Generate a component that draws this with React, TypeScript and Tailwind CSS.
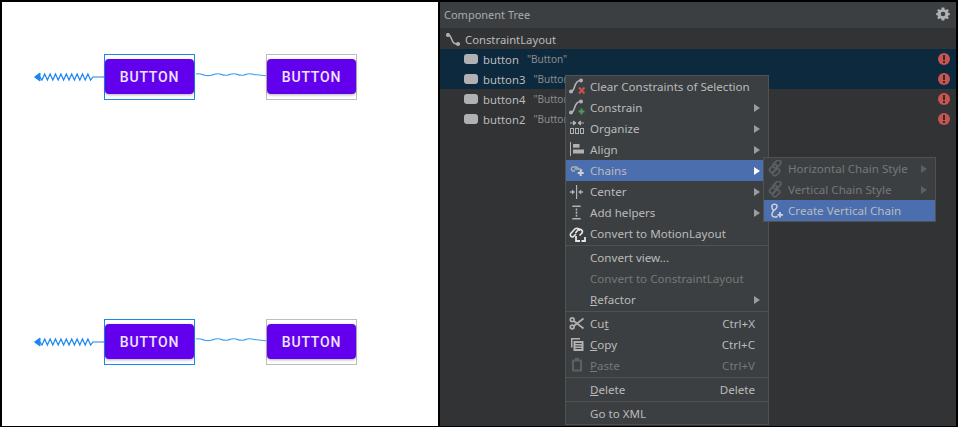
import React from 'react';

const uiFont = "font-['Noto_Sans',sans-serif]";

function Zigzag() {
  return (
    <svg width="72" height="14" viewBox="0 0 72 14" className="absolute left-[32px] top-[16px]">
      <path d="M0.5 7 L6 3 V11 Z" fill="#1a86f0" stroke="#1a86f0" />
      <path d="M6 7 L8 10 L10.7 4 L13.4 10 L16.1 4 L18.8 10 L21.5 4 L24.2 10 L26.9 4 L29.6 10 L32.3 4 L35 10 L37.7 4 L40.4 10 L43.1 4 L45.8 10 L48.5 4 L51.2 10 L53.9 4 L56.6 10 L59 7 H70" fill="none" stroke="#1a86f0" strokeWidth="1.2" />
    </svg>
  );
}

function Wave() {
  return (
    <svg width="72" height="8" viewBox="0 0 72 8" className="absolute left-[194px] top-[17px]">
      <path d="M0 3 C3 2 5 3 8 4 S13 5 16 4 S21 2 24 3 S29 5 32 4 S37 2 40 3 S45 5 48 4 S53 2 56 3 S60 4 63 4 L72 5" fill="none" stroke="#3d9bf5" strokeWidth="1.1" />
    </svg>
  );
}

function CanvasButton({ left }: { left: string }) {
  return (
    <div className={`absolute ${left} top-[5px] flex h-[35px] w-[89px] items-center justify-center rounded-[4px] bg-[#6200ee] pt-[1px] font-['Roboto',sans-serif] text-[14px] font-medium tracking-[0.8px] text-white/90 shadow-[0_1px_3px_rgba(0,0,0,0.3)]`}>
      BUTTON
    </div>
  );
}

function CanvasRow({ className }: { className: string }) {
  return (
    <div className={`relative h-[46px] ${className}`}>
      <Zigzag />
      <Wave />
      <div className="absolute left-[102px] top-0 h-[46px] w-[91px] border border-[#1a86f0]" />
      <div className="absolute left-[264px] top-0 h-[46px] w-[91px] border border-[#bdbdbd]" />
      <CanvasButton left="left-[103px]" />
      <CanvasButton left="left-[265px]" />
    </div>
  );
}

function WidgetIcon() {
  return <span className="h-[10px] w-[14px] rounded-[3px] bg-[#afb1b3]" />;
}

function ErrorIcon() {
  return (
    <svg width="12" height="12" viewBox="0 0 12 12" className="shrink-0">
      <circle cx="6" cy="6" r="6" fill="#c75450" />
      <rect x="5" y="2" width="2" height="5" fill="#2b2d2e" />
      <rect x="5" y="8" width="2" height="2" fill="#2b2d2e" />
    </svg>
  );
}

function TreeRow({ name, selected }: { name: string; selected?: boolean }) {
  return (
    <div className={`flex h-[20px] items-center pl-[24px] pr-[6px] ${selected ? 'bg-[#0d293e]' : ''}`}>
      <WidgetIcon />
      <span className="ml-[5px] pt-[2px] text-[11.3px] text-[#bbbbbb]">{name}</span>
      <span className="ml-[8px] pt-[1px] text-[10px] text-[#8c8c8c]">"Button"</span>
      <span className="flex-1" />
      <ErrorIcon />
    </div>
  );
}

function GearIcon() {
  return (
    <svg width="14" height="14" viewBox="0 0 14 14" className="mb-[2px]">
      <path d="M5.7 0.5 H8.3 L8.7 2.4 L10 2.9 L11.5 1.9 L12.9 3.5 L11.8 4.8 L12.2 5.8 L13.8 6.1 V8.1 L12.2 8.4 L11.8 9.5 L12.8 10.9 L11.2 12.3 L9.9 11.3 L8.7 11.8 L8.3 13.5 H5.7 L5.3 11.8 L4.1 11.3 L2.8 12.3 L1.2 10.9 L2.2 9.5 L1.8 8.4 L0.2 8.1 V6.1 L1.8 5.8 L2.2 4.8 L1.1 3.5 L2.5 1.9 L4 2.9 L5.3 2.4 Z" fill="#afb1b3" />
      <circle cx="7" cy="7" r="2.3" fill="#3c3f41" />
    </svg>
  );
}

function ConstraintGlyph({ badge }: { badge: 'x' | 'plus' }) {
  return (
    <svg width="18" height="18" viewBox="0 0 18 18">
      <path d="M3 13.5 C8 13.5 5 2.5 12.5 2.5" fill="none" stroke="#afb1b3" strokeWidth="1.6" />
      <circle cx="3" cy="13.5" r="2" fill="#afb1b3" />
      <circle cx="13" cy="2.5" r="2" fill="#afb1b3" />
      {badge === 'x' && <path d="M11 9.5 L16.5 15.5 M16.5 9.5 L11 15.5" stroke="#c75450" strokeWidth="2" />}
      {badge === 'plus' && <path d="M13.5 9.5 V15.5 M10.5 12.5 H16.5" stroke="#499c54" strokeWidth="2" />}
    </svg>
  );
}

function DiagonalChain() {
  return (
    <svg width="18" height="18" viewBox="0 0 18 18" fill="none" stroke="#5d6063" strokeWidth="1.6">
      <rect x="6.5" y="1.5" width="9" height="5" rx="2.5" transform="rotate(-45 11 4)" />
      <rect x="3" y="6" width="9" height="5" rx="2.5" transform="rotate(-45 7.5 8.5)" />
      <rect x="6" y="10" width="8" height="4.5" rx="2.2" transform="rotate(-45 10 12)" />
    </svg>
  );
}

function VerticalChainAdd() {
  return (
    <svg width="18" height="18" viewBox="0 0 18 18" fill="none" stroke="#cfd1d3" strokeWidth="1.5">
      <path d="M6 9 C4 7 3.5 5 4 3.5 C4.6 1.8 8.4 1.8 9 3.5 C9.5 5 8 7 5.5 9 C4 10.5 3.5 12 4 13.5 C4.6 15.2 8 15.2 9.5 14.5" />
      <path d="M12 10 V15.5 M9.5 12.8 H15" strokeWidth="1.8" />
    </svg>
  );
}

const icons: Record<string, React.ReactNode> = {
  clear: <ConstraintGlyph badge="x" />,
  constrain: <ConstraintGlyph badge="plus" />,
  organize: (
    <svg width="18" height="18" viewBox="0 0 18 18" fill="none" stroke="#afb1b3">
      <path d="M2 3 H6 M8 3 L5.5 1 V5 Z M16 3 H12 M10 3 L12.5 1 V5 Z" fill="#afb1b3" />
      <rect x="2.5" y="8.5" width="3" height="5" />
      <rect x="7.5" y="8.5" width="3" height="5" />
      <rect x="12.5" y="8.5" width="3" height="5" />
    </svg>
  ),
  align: (
    <svg width="18" height="18" viewBox="0 0 18 18" fill="#afb1b3">
      <rect x="2" y="1" width="1" height="14" />
      <rect x="5" y="3" width="6.5" height="3.7" />
      <rect x="5" y="8.5" width="11" height="4" />
    </svg>
  ),
  chains: (
    <svg width="18" height="18" viewBox="0 0 18 18" fill="none" stroke="#afb1b3" strokeWidth="1.4">
      <path d="M7 9 H4.5 A2.3 2.3 0 0 1 4.5 5 H9 A2.3 2.3 0 0 1 10 7.5" />
      <path d="M6.5 7 H12 A2.2 2.2 0 0 1 14 9" />
      <path d="M12.7 8 V14 M9.7 11 H15.7" stroke="#cfd1d3" strokeWidth="2" />
    </svg>
  ),
  center: (
    <svg width="18" height="18" viewBox="0 0 18 18" fill="#afb1b3">
      <rect x="8" y="2" width="1.2" height="14" />
      <path d="M2 8.3 H4 V6.5 L7 9 L4 11.5 V9.7 H2 Z M15 8.3 H13.2 V6.5 L10.2 9 L13.2 11.5 V9.7 H15 Z" />
    </svg>
  ),
  helpers: (
    <svg width="18" height="18" viewBox="0 0 18 18" fill="#afb1b3">
      <rect x="4.3" y="1.5" width="8.4" height="1.5" />
      <rect x="4.3" y="14" width="8.4" height="1.5" />
      <rect x="7.7" y="4.5" width="1.6" height="2" />
      <rect x="7.7" y="7.5" width="1.6" height="2.2" />
      <rect x="7.7" y="10.7" width="1.6" height="2" />
    </svg>
  ),
  motion: (
    <svg width="18" height="18" viewBox="0 0 18 18" fill="none" stroke="#e4e6e8" strokeWidth="1.6">
      <path d="M8 9 L5 12 A2.3 2.3 0 0 1 2.6 8.6 L7 3.8 A2.8 2.8 0 0 1 11.5 6" />
      <path d="M7.5 8 L9.5 5.5 A2.3 2.3 0 0 1 14 8 L11.5 10.5" />
      <path d="M8 11 V16 H12 M17 12 V16 H13.5" strokeWidth="1.8" />
    </svg>
  ),
  cut: (
    <svg width="18" height="18" viewBox="0 0 18 18" fill="none" stroke="#afb1b3" strokeWidth="1.7">
      <circle cx="4.2" cy="4.8" r="1.9" />
      <circle cx="4.2" cy="12" r="1.9" />
      <path d="M5.8 6 L15.5 13.5 M5.8 11 L15.5 3.5" />
    </svg>
  ),
  copy: (
    <svg width="18" height="18" viewBox="0 0 18 18">
      <path d="M3 2 H4.5 V11.5 H3 Z M3 2 H12 V3.5 H3 Z" fill="#afb1b3" />
      <rect x="5.5" y="5" width="10" height="10" fill="#afb1b3" />
      <path d="M7.5 7.5 H13.5 M7.5 10 H13.5 M7.5 12.5 H13.5" stroke="#3c3f41" />
    </svg>
  ),
  paste: (
    <svg width="18" height="18" viewBox="0 0 18 18" fill="none" stroke="#5d6063" strokeWidth="2">
      <rect x="5" y="3.5" width="8" height="10" />
      <path d="M7 2 H11" strokeWidth="2.5" />
    </svg>
  ),
};

type MenuEntry = {
  label?: React.ReactNode;
  icon?: string;
  arrow?: boolean;
  active?: boolean;
  disabled?: boolean;
  shortcut?: string;
  sep?: boolean;
};

const menu: MenuEntry[] = [
  { label: 'Clear Constraints of Selection', icon: 'clear' },
  { label: 'Constrain', icon: 'constrain', arrow: true },
  { label: 'Organize', icon: 'organize', arrow: true },
  { label: 'Align', icon: 'align', arrow: true },
  { label: 'Chains', icon: 'chains', arrow: true, active: true },
  { label: 'Center', icon: 'center', arrow: true },
  { label: 'Add helpers', icon: 'helpers', arrow: true },
  { label: 'Convert to MotionLayout', icon: 'motion' },
  { sep: true },
  { label: 'Convert view...' },
  { label: 'Convert to ConstraintLayout', disabled: true },
  { label: <><u>R</u>efactor</>, arrow: true },
  { sep: true },
  { label: <>Cu<u>t</u></>, icon: 'cut', shortcut: 'Ctrl+X' },
  { label: <><u>C</u>opy</>, icon: 'copy', shortcut: 'Ctrl+C' },
  { label: <><u>P</u>aste</>, icon: 'paste', shortcut: 'Ctrl+V', disabled: true },
  { sep: true },
  { label: <><u>D</u>elete</>, shortcut: 'Delete' },
  { sep: true },
  { label: 'Go to XML' },
];

function Arrow({ color }: { color: string }) {
  return (
    <svg width="6" height="8" viewBox="0 0 6 8" className="shrink-0">
      <path d="M0 0 L6 4 L0 8 Z" fill={color} />
    </svg>
  );
}

function MenuRow({ item }: { item: MenuEntry }) {
  if (item.sep) return <div className="my-[1px] h-px bg-[#515151]" />;
  const text = item.disabled ? 'text-[#777777]' : 'text-[#bbbbbb]';
  return (
    <div className={`flex h-[21px] items-center pr-[8px] text-[11.6px] ${text} ${item.active ? 'bg-[#4b6eaf]' : ''}`}>
      <span className="flex w-[24px] shrink-0 items-center pl-[2px]">{item.icon && icons[item.icon]}</span>
      <span className="pt-[1px]">{item.label}</span>
      <span className="flex-1" />
      {item.shortcut && <span className={`pr-[5px] pt-[1px] ${text}`}>{item.shortcut}</span>}
      {item.arrow && <Arrow color={item.active ? '#ffffff' : '#9a9da0'} />}
    </div>
  );
}

function ContextMenu() {
  return (
    <div className={`absolute left-[125px] top-[73px] w-[204px] border border-[#515151] bg-[#3c3f41] ${uiFont}`}>
      {menu.map((item, i) => (
        <MenuRow key={i} item={item} />
      ))}
    </div>
  );
}

function SubMenu() {
  return (
    <div className={`absolute left-[323px] top-[155px] w-[173px] border border-[#515151] bg-[#3c3f41] ${uiFont} text-[11.6px]`}>
      <div className="flex h-[21px] items-center pr-[8px] text-[#777777]">
        <span className="flex w-[24px] pl-[2px]"><DiagonalChain /></span>
        <span>Horizontal Chain Style</span>
        <span className="flex-1" />
        <Arrow color="#5d6063" />
      </div>
      <div className="flex h-[21px] items-center pr-[8px] text-[#777777]">
        <span className="flex w-[24px] pl-[2px]"><DiagonalChain /></span>
        <span>Vertical Chain Style</span>
        <span className="flex-1" />
        <Arrow color="#5d6063" />
      </div>
      <div className="flex h-[21px] items-center bg-[#4b6eaf] text-[#bbbbbb]">
        <span className="flex w-[24px] pl-[4px]"><VerticalChainAdd /></span>
        <span>Create Vertical Chain</span>
      </div>
    </div>
  );
}

export default function App() {
  return (
    <div className="flex h-[427px] w-[958px] gap-[2px] overflow-hidden bg-black p-[2px] pb-[1px]">
      <div className="w-[436px] bg-white pt-[52px]">
        <CanvasRow className="" />
        <CanvasRow className="mt-[219px]" />
      </div>
      <div className={`relative flex-1 bg-[#313335] ${uiFont}`}>
        <div className="flex h-[26px] items-center justify-between bg-[#3c3f41] pl-[4px] pr-[6px] text-[11px] text-[#a9abad]">
          <span>Component Tree</span>
          <GearIcon />
        </div>
        <div className="flex h-[21px] items-center pl-[6px] text-[11.3px] text-[#bbbbbb]">
          <svg width="14" height="14" viewBox="0 0 14 14" fill="none" stroke="#afb1b3" strokeWidth="1.5" className="mt-[2px]">
            <path d="M2 2 C7 2 4 11 11 11" />
            <circle cx="2" cy="2" r="1.3" fill="#afb1b3" />
            <circle cx="12" cy="11" r="1.3" fill="#afb1b3" />
          </svg>
          <span className="ml-[5px] pt-[4px]">ConstraintLayout</span>
        </div>
        <TreeRow name="button" selected />
        <TreeRow name="button3" selected />
        <TreeRow name="button4" />
        <TreeRow name="button2" />
        <ContextMenu />
        <SubMenu />
      </div>
    </div>
  );
}
